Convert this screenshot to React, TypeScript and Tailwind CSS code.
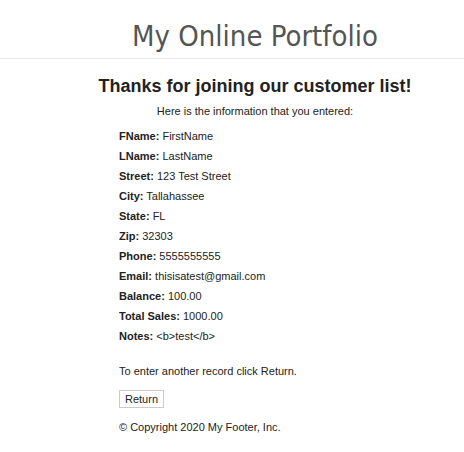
const rows: [string, string][] = [
  ['FName', 'FirstName'],
  ['LName', 'LastName'],
  ['Street', '123 Test Street'],
  ['City', 'Tallahassee'],
  ['State', 'FL'],
  ['Zip', '32303'],
  ['Phone', '5555555555'],
  ['Email', 'thisisatest@gmail.com'],
  ['Balance', '100.00'],
  ['Total Sales', '1000.00'],
  ['Notes', '<b>test</b>'],
]

export default function App() {
  return (
    <div className="w-[464px] h-[452px] bg-white text-[#222] font-['Liberation_Sans',Arial,sans-serif]">
      <header className="h-[59px] border-b border-[#e8e8e8] pl-[46px] flex items-center justify-center">
        <h1 className="text-[29px] leading-[34px] text-[#555] font-['DejaVu_Sans_Condensed','DejaVu_Sans',sans-serif] pt-[13px]">
          My Online Portfolio
        </h1>
      </header>
      <main className="pl-[46px]">
        <h2 className="text-center text-[18px] font-bold mt-[16px] leading-[22px] text-[#222]">
          Thanks for joining our customer list!
        </h2>
        <p className="text-center text-[11px] mt-[7px] leading-[14px]">
          Here is the information that you entered:
        </p>
        <div className="pl-[73px] mt-[8px] flex flex-col">
          {rows.map(([label, value]) => (
            <div key={label} className="text-[11px] leading-[20px]">
              <span className="font-bold">{label}:</span> {value}
            </div>
          ))}
          <p className="text-[11px] leading-[14px] mt-[18px]">To enter another record click Return.</p>
          <div className="mt-[8px]">
            <button className="text-[11px] leading-[14px] px-[5px] py-[1px] border border-[#ccc] bg-white text-[#222]">
              Return
            </button>
          </div>
          <p className="text-[11px] leading-[14px] mt-[10px]">© Copyright 2020 My Footer, Inc.</p>
        </div>
      </main>
    </div>
  )
}
